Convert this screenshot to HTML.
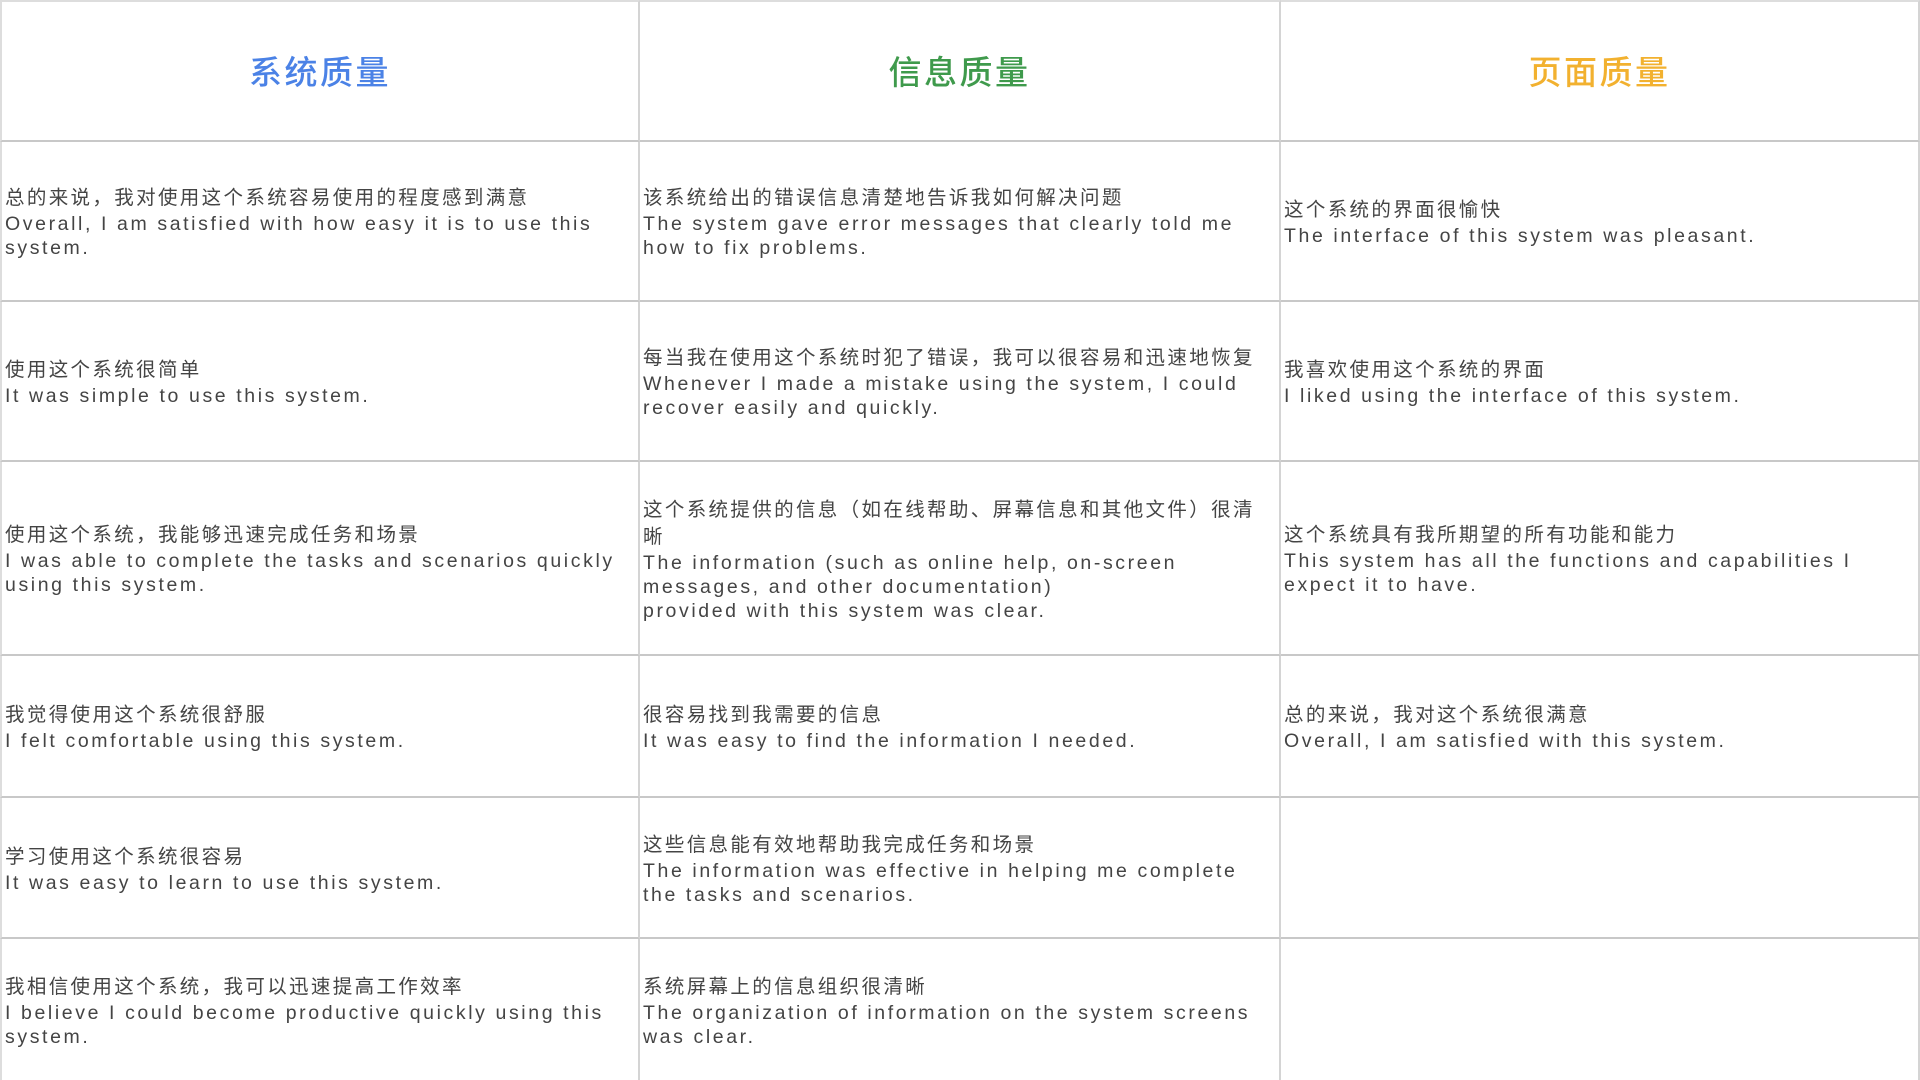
<!DOCTYPE html>
<html><head><meta charset="utf-8"><style>
html,body{margin:0;padding:0;background:#fff;}
body{width:1920px;height:1080px;overflow:hidden;position:relative;font-family:"Liberation Sans","Noto Sans CJK SC",sans-serif;color:#444;}
.c{position:absolute;box-sizing:border-box;border-right:2px solid #d4d4d4;border-bottom:2px solid #c8c8c8;display:flex;flex-direction:column;justify-content:center;padding-left:3px;padding-top:3px;white-space:nowrap;}
.h{align-items:center;padding-left:0;padding-top:0;padding-bottom:2px;font-size:33px;letter-spacing:2.5px;font-weight:500;}
.zh{font-size:19.5px;letter-spacing:2.35px;line-height:27px;}
.en{font-size:19.5px;letter-spacing:2.6px;line-height:24px;}
</style></head><body>
<div class="c h" style="left:0;top:0;width:640px;height:142px;border-top:2px solid #ddd;border-left:2px solid #ddd;color:#4b82e6">系统质量</div>
<div class="c h" style="left:640px;top:0;width:641px;height:142px;border-top:2px solid #ddd;color:#3f9a4c">信息质量</div>
<div class="c h" style="left:1281px;top:0;width:639px;height:142px;border-top:2px solid #ddd;color:#f2b12f">页面质量</div>

<div class="c" style="left:0;top:142px;width:640px;height:160px;border-left:2px solid #ddd"><div class="zh">总的来说，我对使用这个系统容易使用的程度感到满意</div><div class="en">Overall, I am satisfied with how easy it is to use this<br>system.</div></div>
<div class="c" style="left:640px;top:142px;width:641px;height:160px"><div class="zh">该系统给出的错误信息清楚地告诉我如何解决问题</div><div class="en">The system gave error messages that clearly told me<br>how to fix problems.</div></div>
<div class="c" style="left:1281px;top:142px;width:639px;height:160px"><div class="zh">这个系统的界面很愉快</div><div class="en">The interface of this system was pleasant.</div></div>

<div class="c" style="left:0;top:302px;width:640px;height:160px;border-left:2px solid #ddd"><div class="zh">使用这个系统很简单</div><div class="en">It was simple to use this system.</div></div>
<div class="c" style="left:640px;top:302px;width:641px;height:160px"><div class="zh">每当我在使用这个系统时犯了错误，我可以很容易和迅速地恢复</div><div class="en">Whenever I made a mistake using the system, I could<br>recover easily and quickly.</div></div>
<div class="c" style="left:1281px;top:302px;width:639px;height:160px"><div class="zh">我喜欢使用这个系统的界面</div><div class="en">I liked using the interface of this system.</div></div>

<div class="c" style="left:0;top:462px;width:640px;height:194px;border-left:2px solid #ddd"><div class="zh">使用这个系统，我能够迅速完成任务和场景</div><div class="en">I was able to complete the tasks and scenarios quickly<br>using this system.</div></div>
<div class="c" style="left:640px;top:462px;width:641px;height:194px"><div class="zh">这个系统提供的信息（如在线帮助、屏幕信息和其他文件）很清<br>晰</div><div class="en">The information (such as online help, on-screen<br>messages, and other documentation)<br>provided with this system was clear.</div></div>
<div class="c" style="left:1281px;top:462px;width:639px;height:194px"><div class="zh">这个系统具有我所期望的所有功能和能力</div><div class="en">This system has all the functions and capabilities I<br>expect it to have.</div></div>

<div class="c" style="left:0;top:656px;width:640px;height:142px;border-left:2px solid #ddd"><div class="zh">我觉得使用这个系统很舒服</div><div class="en">I felt comfortable using this system.</div></div>
<div class="c" style="left:640px;top:656px;width:641px;height:142px"><div class="zh">很容易找到我需要的信息</div><div class="en">It was easy to find the information I needed.</div></div>
<div class="c" style="left:1281px;top:656px;width:639px;height:142px"><div class="zh">总的来说，我对这个系统很满意</div><div class="en">Overall, I am satisfied with this system.</div></div>

<div class="c" style="left:0;top:798px;width:640px;height:141px;border-left:2px solid #ddd"><div class="zh">学习使用这个系统很容易</div><div class="en">It was easy to learn to use this system.</div></div>
<div class="c" style="left:640px;top:798px;width:641px;height:141px"><div class="zh">这些信息能有效地帮助我完成任务和场景</div><div class="en">The information was effective in helping me complete<br>the tasks and scenarios.</div></div>
<div class="c" style="left:1281px;top:798px;width:639px;height:141px"></div>

<div class="c" style="left:0;top:939px;width:640px;height:141px;border-left:2px solid #ddd;border-bottom:none"><div class="zh">我相信使用这个系统，我可以迅速提高工作效率</div><div class="en">I believe I could become productive quickly using this<br>system.</div></div>
<div class="c" style="left:640px;top:939px;width:641px;height:141px;border-bottom:none"><div class="zh">系统屏幕上的信息组织很清晰</div><div class="en">The organization of information on the system screens<br>was clear.</div></div>
<div class="c" style="left:1281px;top:939px;width:639px;height:141px;border-bottom:none"></div>
</body></html>
